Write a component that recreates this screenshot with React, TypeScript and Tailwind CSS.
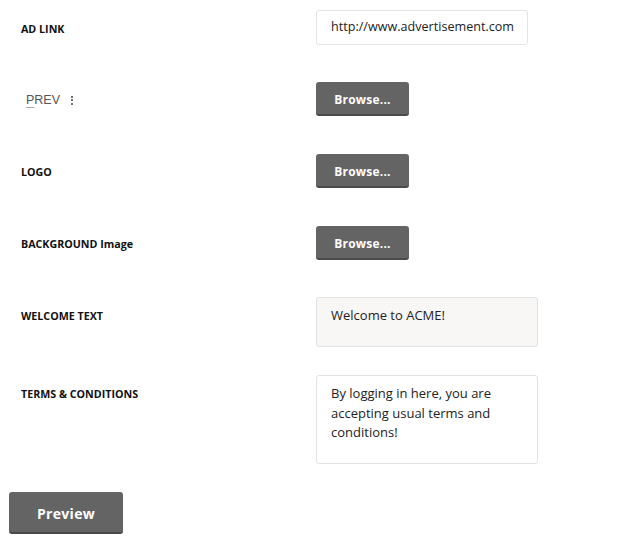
const font = { fontFamily: '"Open Sans", "Liberation Sans", sans-serif' };

function Label({ children, className = "" }: { children: React.ReactNode; className?: string }) {
  return (
    <div className={`w-[316px] shrink-0 pl-[21px] text-[10.7px] font-bold leading-4 text-[#111] ${className}`}>
      {children}
    </div>
  );
}

function BrowseButton() {
  return (
    <button className="h-[34px] w-[93px] rounded-[3px] border-b-2 border-[#4a4a4a] bg-[#646464] pt-[3px] text-[12px] font-bold tracking-[0.2px] text-white">
      Browse...
    </button>
  );
}

export default function App() {
  return (
    <div className="min-h-[543px] w-[624px] bg-white pt-[10px]" style={font}>
      <div className="flex items-start">
        <Label className="mt-[11px]">AD LINK</Label>
        <div className="flex h-[35px] w-[212px] items-center rounded-[3px] border border-[#e4e4e4] pl-[14px] text-[12.6px] text-[#222]">
          http://www.advertisement.com
        </div>
      </div>

      <div className="mt-[37px] flex items-start">
        <div className="mt-[10px] flex w-[316px] shrink-0 items-center pl-[26px] leading-4">
          <span className="text-[12.5px] text-[#555]" style={{ fontFamily: '"Liberation Sans", Arial, sans-serif' }}>
            <span className="underline decoration-[#aaa] underline-offset-[3px]">P</span>REV
          </span>
          <span className="ml-[11px] flex flex-col gap-[1.5px]">
            <span className="h-[2px] w-[2px] rounded-full bg-[#444]" />
            <span className="h-[2px] w-[2px] rounded-full bg-[#444]" />
            <span className="h-[2px] w-[2px] rounded-full bg-[#444]" />
          </span>
        </div>
        <BrowseButton />
      </div>

      <div className="mt-[38px] flex items-start">
        <Label className="mt-[10px]">LOGO</Label>
        <BrowseButton />
      </div>

      <div className="mt-[38px] flex items-start">
        <Label className="mt-[10px]">BACKGROUND Image</Label>
        <BrowseButton />
      </div>

      <div className="mt-[37px] flex items-start">
        <Label className="mt-[11px]">WELCOME TEXT</Label>
        <div className="h-[50px] w-[222px] rounded-[3px] border border-[#e2e2e2] bg-[#f8f7f5] px-[14px] pt-[8px] text-[13px] leading-[19.5px] text-[#222]">
          Welcome to ACME!
        </div>
      </div>

      <div className="mt-[28px] flex items-start">
        <Label className="mt-[11px]">TERMS &amp; CONDITIONS</Label>
        <div className="h-[89px] w-[222px] rounded-[3px] border border-[#e2e2e2] bg-white pl-[14px] pr-[10px] pt-[8px] text-[13px] leading-[19.5px] text-[#222]">
          By logging in here, you are accepting usual terms and conditions!
        </div>
      </div>

      <div className="mt-[28px] pl-[9px]">
        <button className="h-[42px] w-[114px] rounded-[3px] border-b-2 border-[#4a4a4a] bg-[#646464] pt-[3px] text-[14px] font-bold tracking-[0.3px] text-white">
          Preview
        </button>
      </div>
    </div>
  );
}
